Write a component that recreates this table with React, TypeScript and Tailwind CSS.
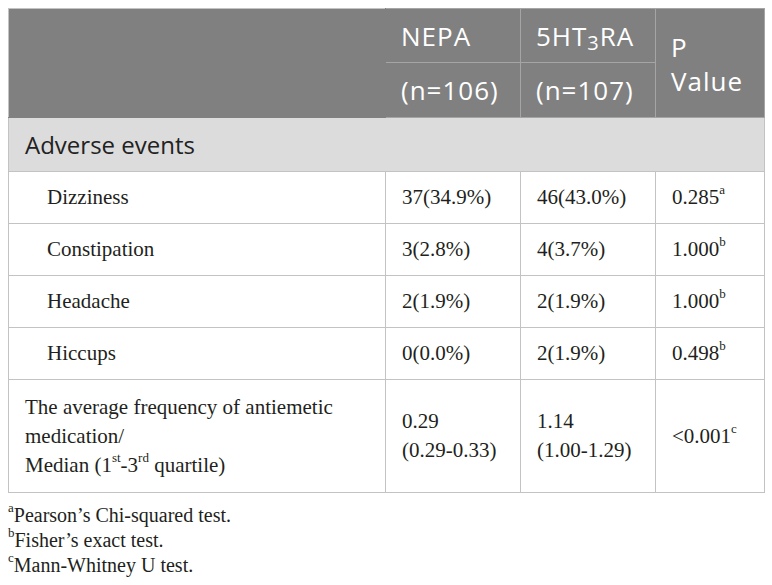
import React from "react";

const serif = { fontFamily: '"Liberation Serif", "Times New Roman", serif' };

function Sup({ children }: { children: React.ReactNode }) {
  return <sup className="text-[13px] relative -top-[2px] align-super leading-none">{children}</sup>;
}

const rows: { label: string; a: string; b: string; p: string; s: string }[] = [
  { label: "Dizziness", a: "37(34.9%)", b: "46(43.0%)", p: "0.285", s: "a" },
  { label: "Constipation", a: "3(2.8%)", b: "4(3.7%)", p: "1.000", s: "b" },
  { label: "Headache", a: "2(1.9%)", b: "2(1.9%)", p: "1.000", s: "b" },
  { label: "Hiccups", a: "0(0.0%)", b: "2(1.9%)", p: "0.498", s: "b" },
];

export default function App() {
  const td = "border border-[#c3c3c3] px-[16px] align-middle text-[#231f20] text-[21px] leading-[29px]";
  const th = "border border-[#a5a5a5] px-[15px] align-middle text-left font-normal text-white text-[26px] leading-[34px] tracking-[1px]";
  return (
    <div className="bg-white w-[772px] h-[585px] p-[8px]">
      <table
        className="border-collapse table-fixed w-[756px] border border-[#c3c3c3]"
        style={{ fontFamily: '"Open Sans", sans-serif' }}
      >
        <colgroup>
          <col className="w-[377px]" />
          <col className="w-[135px]" />
          <col className="w-[135px]" />
          <col className="w-[109px]" />
        </colgroup>
        <thead>
          <tr className="h-[54px] bg-[#808080]">
            <th rowSpan={2} className="border border-[#808080] border-l-[#c3c3c3] border-t-[#c3c3c3] bg-[#808080]"></th>
            <th className={th}>NEPA</th>
            <th className={th}>
              5HT<sub className="text-[20px] relative top-[4px] align-baseline leading-none">3</sub>RA
            </th>
            <th rowSpan={2} className={th + " pt-[2px]"}>
              P Value
            </th>
          </tr>
          <tr className="h-[55px] bg-[#808080]">
            <th className={th}>(n=106)</th>
            <th className={th}>(n=107)</th>
          </tr>
        </thead>
        <tbody>
          <tr className="h-[54px] bg-[#dcdcdc]">
            <td colSpan={4} className="border border-[#c3c3c3] px-[16px] text-[24px] text-[#222222] align-middle">
              Adverse events
            </td>
          </tr>
          {rows.map((r) => (
            <tr key={r.label} className="h-[52px]" style={serif}>
              <td className={td + " pl-[38px]"}>{r.label}</td>
              <td className={td}>{r.a}</td>
              <td className={td}>{r.b}</td>
              <td className={td}>
                {r.p}
                <Sup>{r.s}</Sup>
              </td>
            </tr>
          ))}
          <tr className="h-[113px]" style={serif}>
            <td className={td}>
              The average frequency of antiemetic medication/
              <br />
              Median (1<Sup>st</Sup>-3<Sup>rd</Sup> quartile)
            </td>
            <td className={td}>
              0.29
              <br />
              (0.29-0.33)
            </td>
            <td className={td}>
              1.14
              <br />
              (1.00-1.29)
            </td>
            <td className={td}>
              &lt;0.001<Sup>c</Sup>
            </td>
          </tr>
        </tbody>
      </table>
      <div className="mt-[10px] text-[20px] leading-[25px] text-[#231f20]" style={serif}>
        <div>
          <Sup>a</Sup>Pearson’s Chi-squared test.
        </div>
        <div>
          <Sup>b</Sup>Fisher’s exact test.
        </div>
        <div>
          <Sup>c</Sup>Mann-Whitney U test.
        </div>
      </div>
    </div>
  );
}
